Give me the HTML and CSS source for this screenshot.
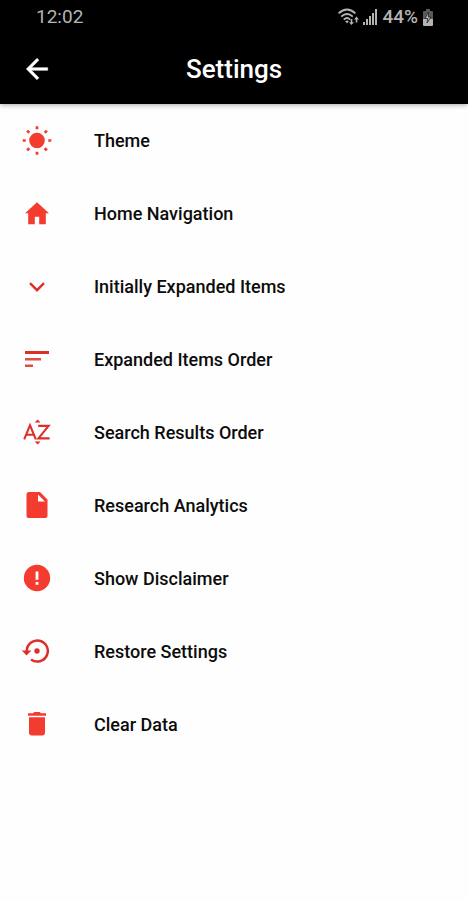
FILE: index.html
```
<!doctype html>
<html lang="en">
<head>
    <meta charset="utf-8">
    <title>Settings</title>
    <meta name="viewport" content="width=device-width, initial-scale=1">
    <link rel="stylesheet" href="styles.css">
</head>

<body>
    <header class="top">
        <div class="status-bar">
            <span class="clock">12:02</span>
            <div class="status-right">
                <svg class="wifi" viewBox="0 0 21 18" aria-hidden="true">
                    <g fill="none" stroke="currentColor" stroke-width="1.9">
                        <path d="M.6 5.4Q9 -2.2 17.4 5.4"/>
                        <path d="M3.2 8.6Q9 3.2 14.8 8.6"/>
                        <path d="M5.8 11.6Q9 8.6 12.2 11.6"/>
                    </g>
                    <path d="M7.2 13.2Q9 11.6 10.8 13.2L9 15.4z"/>
                    <path d="M13.5 17l-2.4-2.8h1.6V11h1.6v3.2h1.6zM18.5 8.6l2.4 2.8h-1.6v3.2h-1.6v-3.2h-1.6z"/>
                </svg>
                <svg class="signal" viewBox="0 0 15 16" aria-hidden="true">
                    <path d="M0 13h2v3H0zM3 10h2v6H3zM6 7h2v9H6zM9 4h2v12H9zM12 0h2v16h-2z"/>
                </svg>
                <span class="percent">44%</span>
                <svg class="battery" viewBox="0 0 12 17" aria-hidden="true">
                    <path opacity=".5" d="M4 0h4v2h2q1 0 1 1v8H1V3q0-1 1-1h2z"/>
                    <path d="M1 10h10v6q0 1-1 1H2q-1 0-1-1z"/>
                    <path d="M6.5 3L3 9.5h2.8L5 14l4-6H6.5z" stroke="#222" stroke-width=".8"/>
                </svg>
            </div>
        </div>
        <div class="app-bar">
            <button class="back" type="button" aria-label="Back">
                <svg viewBox="0 0 24 24"><path d="M20 11H7.83l5.59-5.59L12 4l-8 8 8 8 1.41-1.41L7.83 13H20v-2z"/></svg>
            </button>
            <h1 class="title">Settings</h1>
        </div>
    </header>

    <main class="settings">
        <button class="item" type="button">
            <svg class="icon" viewBox="0 0 28 28" aria-hidden="true">
                <circle cx="14" cy="13.5" r="7.8"/>
                <path d="M14-.8v3M14 24.8v3M-.3 13.5h3M25.3 13.5h3M4.1 3.6l2.2 2.2M21.7 21.2l2.2 2.2M4.1 23.4l2.2-2.2M21.7 5.8l2.2-2.2" fill="none" stroke="currentColor" stroke-width="2.7"/>
            </svg>
            <span>Theme</span>
        </button>
        <button class="item" type="button">
            <svg class="icon" viewBox="0 0 28 28" aria-hidden="true"><path d="M14 2.2L26 13.2h-3.2v11h-6.6v-7.5h-4.4v7.5H5.2v-11H2z"/></svg>
            <span>Home Navigation</span>
        </button>
        <button class="item" type="button">
            <svg class="icon line" viewBox="0 0 28 28" aria-hidden="true"><path d="M7 10.2l7 7 7-7" fill="none" stroke="currentColor" stroke-width="2.4"/></svg>
            <span>Initially Expanded Items</span>
        </button>
        <button class="item" type="button">
            <svg class="icon line" viewBox="0 0 28 28" aria-hidden="true"><path d="M2 5h24v3H2z"/><path opacity=".85" d="M2 12h16v2.5H2zM2 18.5h8V21H2z"/></svg>
            <span>Expanded Items Order</span>
        </button>
        <button class="item" type="button">
            <svg class="icon line" viewBox="0 0 28 28" aria-hidden="true">
                <path d="M1.2 20.4L7 6.2l5.8 14.2M3.2 15.8h7.6M15.2 6.9h10.4L15.4 19.4h11.2" fill="none" stroke="currentColor" stroke-width="2.1"/>
                <path d="M11.6 3.6l3-3 3 3zM11.6 22.4l3 3 3-3z"/>
            </svg>
            <span>Search Results Order</span>
        </button>
        <button class="item" type="button">
            <svg class="icon" viewBox="0 0 28 28" aria-hidden="true"><path d="M6 0h11l7.5 7.5V24q0 2-2 2h-17q-2 0-2-2V2.500Q3.5 0 6 0zM15 2.5v7h7z"/></svg>
            <span>Research Analytics</span>
        </button>
        <button class="item" type="button">
            <svg class="icon" viewBox="0 0 28 28" aria-hidden="true">
                <circle cx="14" cy="13" r="13.2"/>
                <path class="mark" d="M12.6 6.5h2.8v8.2h-2.8zM12.6 17h2.8v2.8h-2.8z"/>
            </svg>
            <span>Show Disclaimer</span>
        </button>
        <button class="item" type="button">
            <svg class="icon line" viewBox="0 0 28 28" aria-hidden="true">
                <path d="M3.8 13A10.5 10.5 0 1 1 8 21.4" fill="none" stroke="currentColor" stroke-width="2.5"/>
                <path d="M-1.2 12.4h9.6l-4.8 5z"/>
                <circle cx="14" cy="13" r="2.7"/>
            </svg>
            <span>Restore Settings</span>
        </button>
        <button class="item" type="button">
            <svg class="icon" viewBox="0 0 28 28" aria-hidden="true"><path d="M6 6.2h16v15.3q0 3-3 3H9q-3 0-3-3zM5 2.2h5L11.2 1h5.6L18 2.2h5v2.6H5z"/></svg>
            <span>Clear Data</span>
        </button>
    </main>
</body>
</html>
```
FILE: styles.css
```
* {
    box-sizing: border-box;
}

body {
    margin: 0;
    background: #fefefe;
    color: #0c0c0c;
    font-family: Roboto, "Liberation Sans", sans-serif;
}

button {
    border: 0;
    padding: 0;
    background: none;
    color: inherit;
    font: inherit;
    cursor: pointer;
}

svg {
    display: block;
    flex: none;
    fill: currentColor;
    overflow: visible;
}

.top {
    background: #000;
    color: #fff;
    box-shadow: 0 1px 5px rgba(0, 0, 0, 0.35);
}

.status-bar {
    display: flex;
    align-items: center;
    justify-content: space-between;
    height: 34px;
    padding: 0 34px 0 36px;
    color: #b4b4b4;
    font-size: 19px;
    line-height: 24px;
}

.status-right {
    display: flex;
    align-items: center;
    gap: 4px;
}

.wifi {
    width: 21px;
    height: 18px;
}

.signal {
    width: 15px;
    height: 16px;
}

.percent {
    font-weight: 500;
}

.battery {
    width: 12px;
    height: 17px;
}

.app-bar {
    display: grid;
    grid-template-columns: 74px 1fr 74px;
    align-items: center;
    height: 70px;
}

.back {
    display: flex;
    align-items: center;
    justify-content: center;
    height: 48px;
}

.back svg {
    width: 32px;
    height: 32px;
    stroke: currentColor;
    stroke-width: 0.4;
}

.title {
    margin: 0;
    font-size: 26px;
    line-height: 32px;
    font-weight: 500;
    text-align: center;
}

.settings {
    display: flex;
    flex-direction: column;
}

.item {
    display: flex;
    align-items: center;
    gap: 43px;
    height: 73px;
    padding: 0 23px;
    font-size: 18px;
    line-height: 24px;
    font-weight: 500;
    text-align: left;
}

.icon {
    width: 28px;
    height: 28px;
    color: #f43b2f;
}

.line {
    color: #dc2f28;
}

.mark {
    fill: #fff;
}
```
